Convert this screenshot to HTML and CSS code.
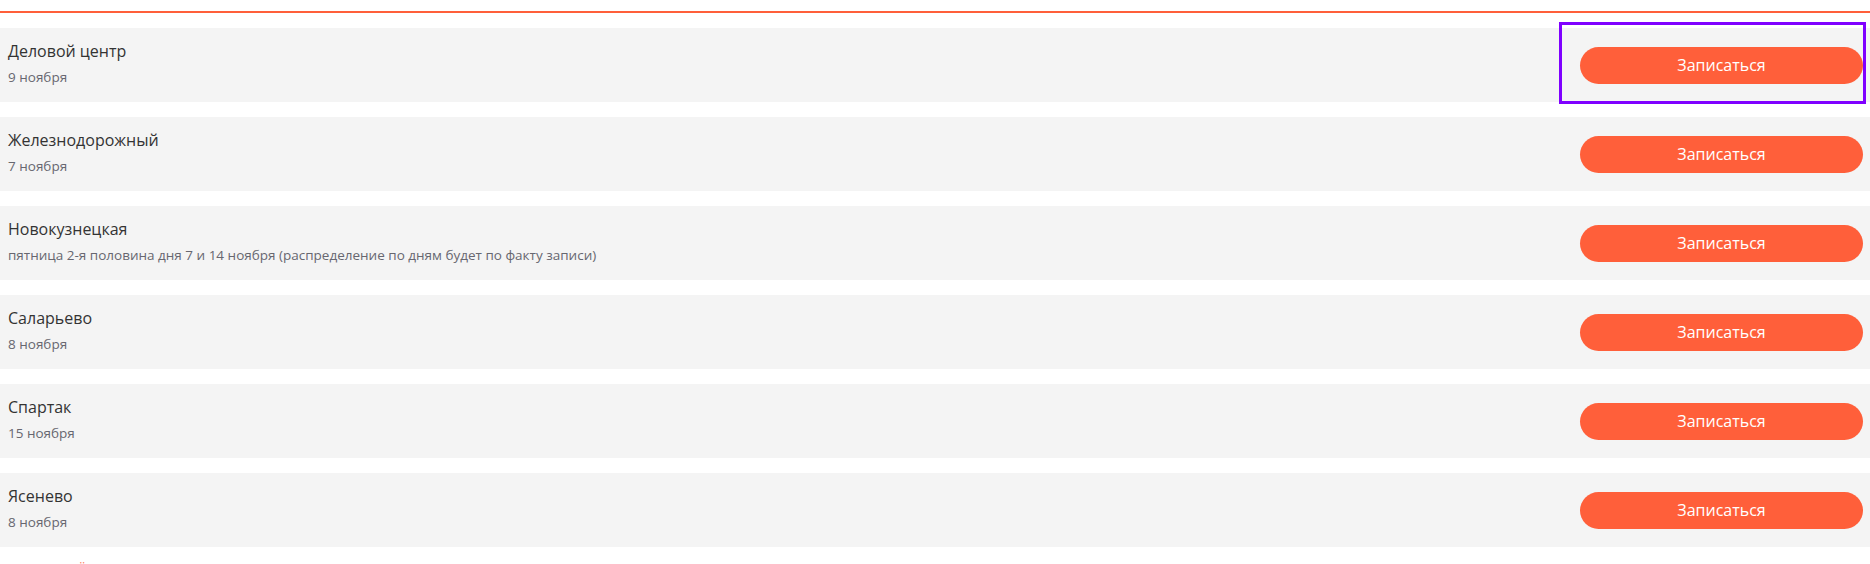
FILE: index.html
```html
<!DOCTYPE html>
<html lang="ru">
<head>
    <meta charset="UTF-8">
    <meta name="viewport" content="width=device-width, initial-scale=1.0">
    <title>Запись на занятия</title>
    <link rel="stylesheet" href="styles.css">
</head>
<body>
    <div class="tabs">
        <span class="tab-count">(6)</span>
    </div>
    <div class="list">
        <div class="row">
            <div class="info">
                <div class="place">Деловой центр</div>
                <div class="date">9 ноября</div>
            </div>
            <div class="action is-selected">
                <button class="btn">Записаться</button>
            </div>
        </div>
        <div class="row">
            <div class="info">
                <div class="place">Железнодорожный</div>
                <div class="date">7 ноября</div>
            </div>
            <div class="action">
                <button class="btn">Записаться</button>
            </div>
        </div>
        <div class="row">
            <div class="info">
                <div class="place">Новокузнецкая</div>
                <div class="date">пятница 2-я половина дня 7 и 14 ноября (распределение по дням будет по факту записи)</div>
            </div>
            <div class="action">
                <button class="btn">Записаться</button>
            </div>
        </div>
        <div class="row">
            <div class="info">
                <div class="place">Саларьево</div>
                <div class="date">8 ноября</div>
            </div>
            <div class="action">
                <button class="btn">Записаться</button>
            </div>
        </div>
        <div class="row">
            <div class="info">
                <div class="place">Спартак</div>
                <div class="date">15 ноября</div>
            </div>
            <div class="action">
                <button class="btn">Записаться</button>
            </div>
        </div>
        <div class="row">
            <div class="info">
                <div class="place">Ясенево</div>
                <div class="date">8 ноября</div>
            </div>
            <div class="action">
                <button class="btn">Записаться</button>
            </div>
        </div>
    </div>
    <div class="more">
        <a class="more-link" href="#">ещё</a>
    </div>
</body>
</html>
```

FILE: styles.css
```css
body {
    font-family: "Open Sans", "Liberation Sans", sans-serif;
    background-color: #ffffff;
    color: #333333;
    margin: 0;
    overflow: hidden;
}
.tabs {
    height: 11px;
    overflow: hidden;
    border-bottom: 2px solid #ff5f3a;
    padding-left: 489px;
}
.tab-count {
    display: block;
    margin-top: -19px;
    font-size: 15px;
    line-height: 20px;
    color: #444444;
}
.list {
    display: flex;
    flex-direction: column;
    gap: 15px;
    padding-top: 15px;
}
.row {
    display: flex;
    justify-content: space-between;
    align-items: center;
    height: 74px;
    box-sizing: border-box;
    background-color: #f4f4f4;
    padding: 0 7px 0 8px;
}
.info {
    align-self: flex-start;
    padding-top: 12px;
}
.place {
    font-size: 16px;
    line-height: 22px;
    color: #333333;
}
.date {
    margin-top: 5px;
    font-size: 13.5px;
    line-height: 20px;
    color: #676770;
}
.action {
    position: relative;
    display: flex;
    padding-left: 18px;
}
.is-selected::after {
    content: "";
    position: absolute;
    top: -25px;
    bottom: -20px;
    left: -3px;
    right: -3px;
    border: 3px solid #7f00ff;
    pointer-events: none;
}
.btn {
    width: 283px;
    height: 37px;
    border: none;
    border-radius: 19px;
    background-color: #ff5f3a;
    color: #ffffff;
    font-family: "Open Sans", "Liberation Sans", sans-serif;
    font-size: 16px;
    cursor: pointer;
}
.more {
    margin-top: 9px;
    padding-left: 56px;
    font-size: 15px;
    line-height: 20px;
}
.more-link {
    color: #ff7a5c;
    text-decoration: none;
}
```
